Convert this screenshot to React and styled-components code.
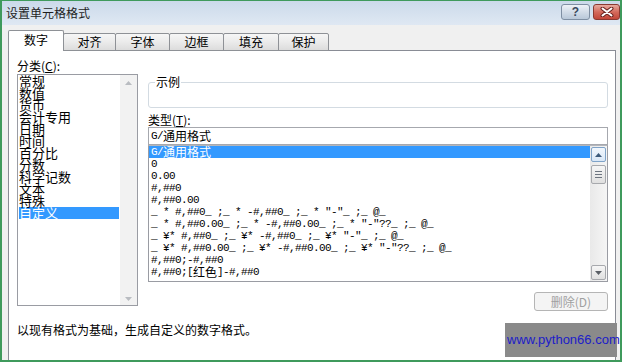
import styled, { createGlobalStyle } from "styled-components";

const GlobalStyle = createGlobalStyle`
  html, body { margin: 0; padding: 0; background: #fff; }
  body { font-family: "Noto Sans CJK SC", "Liberation Sans", sans-serif; color: #000; }
`;

const Frame = styled.div`
  position: relative;
  width: 622px; height: 362px;
  box-sizing: border-box;
  border: 2px solid #3f9a5c;
  border-top-width: 1px;
  background: #f0f0f0;
  display: flex; flex-direction: column;
  overflow: hidden;
`;

const TitleBar = styled.div`
  height: 24px; flex-shrink: 0;
  display: flex; align-items: center; justify-content: space-between;
  padding: 0 0 0 4px;
  background: linear-gradient(180deg, #cbdaea 0%, #dfe8f3 100%);
`;

const Title = styled.span`
  font-size: 12px; line-height: 14px; color: #1e1e1e;
`;

const TitleBtns = styled.div`
  display: flex; gap: 3px; align-self: flex-start; margin-top: 3px;
`;

const WinBtn = styled.div`
  width: ${(p) => p.$w}px; height: 16px;
  box-sizing: border-box;
  border-radius: 3px;
  display: flex; align-items: center; justify-content: center;
  border: 1px solid ${(p) => (p.$close ? "#8a3a32" : "#7f8fa3")};
  background: ${(p) =>
    p.$close
      ? "linear-gradient(180deg, #e8aaa0 0%, #d46a5c 50%, #c2473a 100%)"
      : "linear-gradient(180deg, #eef2f7 0%, #d2dce8 50%, #b9c8d9 100%)"};
  color: #3a4a5e;
  font-family: "Liberation Sans", sans-serif;
  font-weight: bold; font-size: 12px;
`;

const Body = styled.div`
  flex: 1;
  display: flex; flex-direction: column;
  padding: 5px 4px 0 6px;
`;

const TabRow = styled.div`
  display: flex; align-items: flex-end;
  height: 21px;
  margin-bottom: -1px;
  position: relative; z-index: 1;
`;

const Tab = styled.div`
  width: ${(p) => p.$w}px;
  height: ${(p) => (p.$active ? 21 : 18)}px;
  box-sizing: border-box;
  border: 1px solid #8e9196;
  border-bottom: ${(p) => (p.$active ? "none" : "1px solid #8e9196")};
  margin-left: ${(p) => (p.$first ? 0 : -1)}px;
  border-radius: 2px 2px 0 0;
  background: ${(p) =>
    p.$active ? "#fff" : "linear-gradient(180deg, #f6f6f6 0%, #ebebeb 50%, #dcdcdc 100%)"};
  display: flex; align-items: center; justify-content: center;
  font-size: 12px; line-height: 14px;
  padding-bottom: ${(p) => (p.$active ? 2 : 0)}px;
`;

const Panel = styled.div`
  flex: 1;
  background: #fff;
  border: 1px solid #898c95;
  border-bottom: none;
  padding: 8px 7px 0 8px;
  display: flex; flex-direction: column;
`;

const Columns = styled.div`
  display: grid;
  grid-template-columns: 121px 460px;
  column-gap: 10px;
  align-items: start;
`;

const Col = styled.div`
  display: flex; flex-direction: column;
`;

const Label = styled.div`
  font-size: 12px; line-height: 14px; color: #000;
  margin-top: ${(p) => p.$mt || 0}px;
  u { text-decoration: underline; }
`;

const CatList = styled.div`
  margin-top: 1px;
  height: 232px;
  box-sizing: border-box;
  border: 1px solid #9a9ca3;
  display: flex;
`;

const CatItems = styled.div`
  flex: 1;
  padding: 0 1px;
`;

const CatItem = styled.div`
  height: 12px;
  font-size: 13px; line-height: 12px;
  white-space: nowrap;
  background: ${(p) => (p.$sel ? "#3399ff" : "transparent")};
  color: ${(p) => (p.$sel ? "#fff" : "#000")};
`;

const Track = styled.div`
  width: 17px;
  box-sizing: border-box;
  background: ${(p) => p.$bg || "#f2f2f2"};
  display: flex; flex-direction: column; align-items: center;
  padding: ${(p) => (p.$boxed ? "1px 1px" : "6px 0 4px")};
  gap: 2px;
`;

const Spacer = styled.div`
  flex: 1;
`;

const ScrollBtn = styled.div`
  width: 15px; height: 15px;
  box-sizing: border-box;
  border: 1px solid ${(p) => (p.$hot ? "#7fa3c8" : "#a7a9ad")};
  border-radius: 2px;
  background: ${(p) =>
    p.$hot
      ? "linear-gradient(180deg, #f2f7fd 0%, #d9e7f6 100%)"
      : "linear-gradient(180deg, #f6f6f6 0%, #e0e0e0 100%)"};
  display: flex; align-items: center; justify-content: center;
`;

const Thumb = styled(ScrollBtn)`
  height: 19px; margin-top: 1px;
  flex-direction: column; gap: 2px;
`;

const Grip = styled.div`
  width: 7px; height: 1px; background: #6d7580;
`;

const Sample = styled.fieldset`
  margin: 16px 0 0;
  height: 33px;
  box-sizing: border-box;
  padding: 0 6px;
  border: 1px solid #d3dbe2;
  border-radius: 3px;
  legend {
    padding: 0 1px;
    font-size: 12px; line-height: 14px;
  }
`;

const TypeInput = styled.div`
  height: 18px;
  box-sizing: border-box;
  border: 1px solid #a6a8ae;
  padding: 2px 0 0 2px;
  font-family: "Liberation Mono", "Noto Sans CJK SC", monospace;
  font-size: 11px; letter-spacing: -0.6px; line-height: 12px;
`;

const TypeList = styled.div`
  height: 137px;
  box-sizing: border-box;
  border: 1px solid #9a9ca3;
  border-top-color: #b4b6bb;
  display: flex;
`;

const TypeRows = styled.div`
  flex: 1;
  overflow: hidden;
`;

const TypeRow = styled.div`
  height: 12px;
  padding-left: 2px;
  font-family: "Liberation Mono", "Noto Sans CJK SC", monospace;
  font-size: 11px; letter-spacing: -0.6px; line-height: 12px;
  white-space: pre;
  overflow: hidden;
  background: ${(p) => (p.$sel ? "#3399ff" : "transparent")};
  color: ${(p) => (p.$sel ? "#fff" : "#000")};
`;

const Cjk = styled.span`
  font-family: "Noto Sans CJK SC", sans-serif;
  font-size: 12px; line-height: 12px; letter-spacing: 0;
  vertical-align: top;
`;

const BtnRow = styled.div`
  display: flex; justify-content: flex-end;
  margin-top: 10px;
`;

const DelBtn = styled.div`
  width: 74px; height: 19px;
  box-sizing: border-box;
  border: 1px solid #b5b5b5;
  border-radius: 3px;
  background: #f4f4f4;
  color: #a0a0a0;
  font-size: 12px; line-height: 17px;
  text-align: center;
`;

const Desc = styled.div`
  margin-top: 12px;
  font-size: 12px; line-height: 14px;
`;

const Watermark = styled.div`
  position: absolute;
  right: 3px; bottom: 3px;
  width: 112px; height: 34px;
  background: #8a8a8a;
  color: #1c1cc8;
  font-family: "Liberation Sans", sans-serif;
  font-size: 13px; line-height: 34px;
  padding-left: 2px;
  box-sizing: border-box;
  white-space: nowrap;
`;

const Arrow = ({ up, color = "#8b8f96" }) => (
  <svg width="7" height="4" viewBox="0 0 7 4">
    <polygon points={up ? "0,4 3.5,0 7,4" : "0,0 3.5,4 7,0"} fill={color} />
  </svg>
);

const CloseX = () => (
  <svg width="14" height="10" viewBox="0 0 14 10">
    <path d="M2.5 1.5 L11.5 8.5 M11.5 1.5 L2.5 8.5" stroke="#6a2420" strokeWidth="4" strokeLinecap="round" />
    <path d="M2.5 1.5 L11.5 8.5 M11.5 1.5 L2.5 8.5" stroke="#fff" strokeWidth="2" strokeLinecap="round" />
  </svg>
);

const tabs = [
  ["数字", 56],
  ["对齐", 53],
  ["字体", 55],
  ["边框", 55],
  ["填充", 56],
  ["保护", 51],
];

const categories = [
  "常规", "数值", "货币", "会计专用", "日期", "时间",
  "百分比", "分数", "科学记数", "文本", "特殊", "自定义",
];

const formats = [
  <>G/<Cjk>通用格式</Cjk></>,
  "0",
  "0.00",
  "#,##0",
  "#,##0.00",
  '_ * #,##0_ ;_ * -#,##0_ ;_ * "-"_ ;_ @_',
  '_ * #,##0.00_ ;_ * -#,##0.00_ ;_ * "-"??_ ;_ @_',
  '_ ¥* #,##0_ ;_ ¥* -#,##0_ ;_ ¥* "-"_ ;_ @_',
  '_ ¥* #,##0.00_ ;_ ¥* -#,##0.00_ ;_ ¥* "-"??_ ;_ @_',
  "#,##0;-#,##0",
  <>#,##0;[<Cjk>红色</Cjk>]-#,##0</>,
];

export default function App() {
  return (
    <>
      <GlobalStyle />
      <Frame>
        <TitleBar>
          <Title>设置单元格格式</Title>
          <TitleBtns>
            <WinBtn $w={29}>?</WinBtn>
            <WinBtn $w={27} $close>
              <CloseX />
            </WinBtn>
          </TitleBtns>
        </TitleBar>

        <Body>
          <TabRow>
            {tabs.map(([name, w], i) => (
              <Tab key={name} $w={w} $active={i === 0} $first={i === 0}>
                {name}
              </Tab>
            ))}
          </TabRow>

          <Panel>
            <Columns>
              <Col>
                <Label>
                  分类(<u>C</u>):
                </Label>
                <CatList>
                  <CatItems>
                    {categories.map((c) => (
                      <CatItem key={c} $sel={c === "自定义"}>
                        {c}
                      </CatItem>
                    ))}
                  </CatItems>
                  <Track>
                    <Arrow up color="#b9bcc1" />
                    <Spacer />
                    <Arrow color="#b9bcc1" />
                  </Track>
                </CatList>
              </Col>

              <Col>
                <Sample>
                  <legend>示例</legend>
                </Sample>
                <Label $mt={5}>
                  类型(<u>T</u>):
                </Label>
                <TypeInput>
                  G/<Cjk>通用格式</Cjk>
                </TypeInput>
                <TypeList>
                  <TypeRows>
                    {formats.map((f, i) => (
                      <TypeRow key={i} $sel={i === 0}>
                        {f}
                      </TypeRow>
                    ))}
                  </TypeRows>
                  <Track $boxed $bg="linear-gradient(90deg, #e9e9e9, #f5f5f5)">
                    <ScrollBtn $hot>
                      <Arrow up color="#3d5a7a" />
                    </ScrollBtn>
                    <Thumb>
                      <Grip />
                      <Grip />
                      <Grip />
                    </Thumb>
                    <Spacer />
                    <ScrollBtn>
                      <Arrow color="#5a5f66" />
                    </ScrollBtn>
                  </Track>
                </TypeList>
                <BtnRow>
                  <DelBtn>删除(D)</DelBtn>
                </BtnRow>
              </Col>
            </Columns>

            <Desc>以现有格式为基础，生成自定义的数字格式。</Desc>
          </Panel>
        </Body>

        <Watermark>www.python66.com</Watermark>
      </Frame>
    </>
  );
}
